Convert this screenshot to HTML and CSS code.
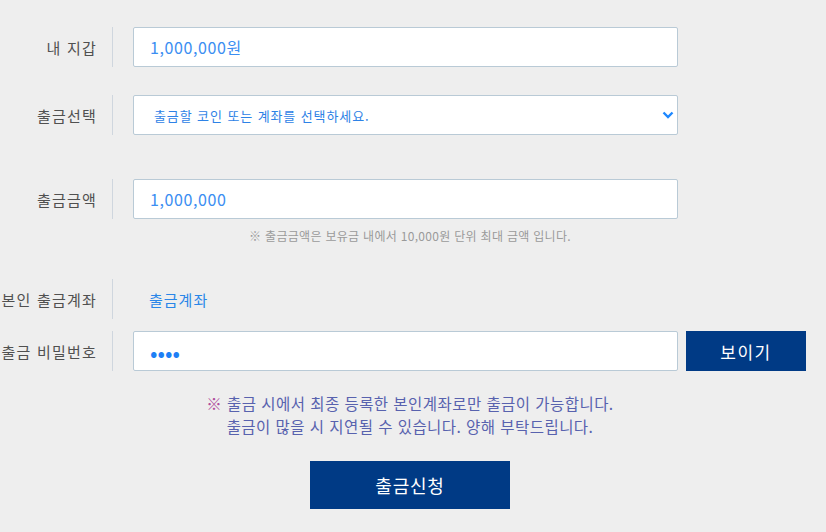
FILE: index.html
```html
<!DOCTYPE html>
<html lang="ko">
<head>
<meta charset="utf-8">
<title>출금신청</title>
<link rel="stylesheet" href="styles.css">
</head>
<body>
<form class="withdraw">
  <div class="row">
    <label class="label">내 지갑</label>
    <span class="sep"></span>
    <input class="field" type="text" value="1,000,000원" readonly>
  </div>
  <div class="row row-select">
    <label class="label">출금선택</label>
    <span class="sep"></span>
    <div class="select-wrap">
      <select class="field select">
        <option>출금할 코인 또는 계좌를 선택하세요.</option>
      </select>
      <svg class="chev" width="12" height="8" viewBox="0 0 12 8"><path d="M1.5 1.5 L6 6 L10.5 1.5" fill="none" stroke="#1e88ff" stroke-width="2.4"/></svg>
    </div>
  </div>
  <div class="row row-amount">
    <label class="label">출금금액</label>
    <span class="sep"></span>
    <input class="field" type="text" value="1,000,000">
  </div>
  <p class="hint">※ 출금금액은 보유금 내에서 10,000원 단위 최대 금액 입니다.</p>
  <div class="row row-account">
    <label class="label">본인 출금계좌</label>
    <span class="sep"></span>
    <span class="account">출금계좌</span>
  </div>
  <div class="row row-pw">
    <label class="label">출금 비밀번호</label>
    <span class="sep"></span>
    <input class="field pw" type="password" value="1234">
    <button type="button" class="btn-show">보이기</button>
  </div>
  <p class="notice"><span class="mark">※</span> 출금 시에서 최종 등록한 본인계좌로만 출금이 가능합니다.<br>출금이 많을 시 지연될 수 있습니다. 양해 부탁드립니다.</p>
  <div class="submit-wrap">
    <button type="button" class="btn-submit">출금신청</button>
  </div>
</form>
</body>
</html>
```

FILE: styles.css
```css
html, body {
  margin: 0;
  padding: 0;
  background: #eeeeee;
}
body {
  font-family: "Noto Sans CJK KR", "Noto Sans", sans-serif;
  color: #555;
}
.withdraw {
  width: 820px;
  padding-top: 27px;
}
.row {
  display: flex;
  align-items: center;
  height: 40px;
}
.row-select { margin-top: 28px; }
.row-amount { margin-top: 44px; }
.row-account { margin-top: 34px; }
.row-pw { margin-top: 12px; }
.label {
  box-sizing: border-box;
  width: 97px;
  flex: none;
  text-align: right;
  white-space: nowrap;
  font-size: 15px;
  letter-spacing: 1.2px;
  color: #505050;
}
.sep {
  flex: none;
  width: 1px;
  height: 40px;
  background: #cfd6de;
  margin-left: 15px;
  margin-right: 20px;
}
.field {
  box-sizing: border-box;
  width: 545px;
  height: 40px;
  border: 1px solid #b9cad6;
  border-radius: 2px;
  background: #fff;
  padding: 0 16px;
  font-family: "Noto Sans CJK KR", "Noto Sans", sans-serif;
  font-size: 16px;
  letter-spacing: 0.6px;
  color: #3b8ef2;
  outline: none;
}
.select-wrap {
  position: relative;
  width: 545px;
  height: 40px;
}
.select {
  appearance: none;
  -webkit-appearance: none;
  padding-left: 20px;
  font-size: 13px;
  letter-spacing: 0.9px;
  color: #2e82e6;
}
.chev {
  position: absolute;
  right: 4px;
  top: 16px;
  pointer-events: none;
}
.hint {
  margin: 8px 0 0;
  text-align: center;
  font-size: 12px;
  letter-spacing: 0.3px;
  line-height: 18px;
  color: #9a9a9a;
}
.account {
  margin-left: 16px;
  font-size: 15px;
  letter-spacing: 1px;
  color: #2a86e8;
}
.pw {
  font-size: 22px;
  letter-spacing: 0;
  color: #1e7ff5;
}
.btn-show {
  flex: none;
  margin-left: 8px;
  width: 120px;
  height: 40px;
  border: 0;
  background: #003a85;
  color: #fff;
  font-family: "Noto Sans CJK KR", "Noto Sans", sans-serif;
  font-size: 17px;
  letter-spacing: 1.5px;
}
.notice {
  margin: 21px 0 0;
  text-align: center;
  font-size: 15.5px;
  letter-spacing: 0.45px;
  line-height: 23px;
  color: #5862ae;
}
.mark {
  color: #b04d9c;
}
.submit-wrap {
  display: flex;
  justify-content: center;
  margin-top: 23px;
}
.btn-submit {
  width: 200px;
  height: 48px;
  border: 0;
  background: #003a85;
  color: #fff;
  font-family: "Noto Sans CJK KR", "Noto Sans", sans-serif;
  font-size: 18px;
  letter-spacing: 0.8px;
}
```
